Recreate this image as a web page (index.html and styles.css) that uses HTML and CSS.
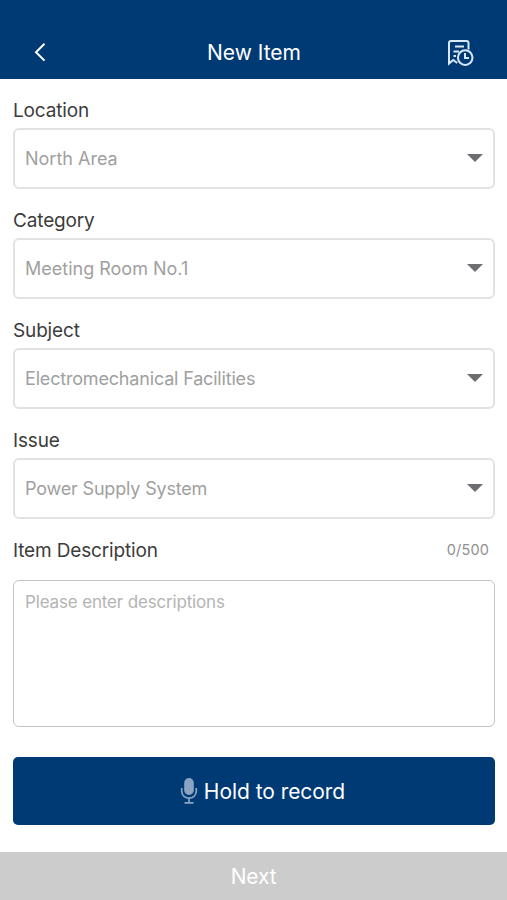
FILE: index.html
```html
<!DOCTYPE html>
<html lang="en">
<head>
<meta charset="utf-8">
<title>New Item</title>
<link rel="stylesheet" href="styles.css">
</head>
<body>
<div class="screen">
  <header class="bar">
    <svg class="back" width="24" height="24" viewBox="0 0 24 24"><path d="M16.500 2.800 L8 11.200 L16.500 19.600"/></svg>
    <h1>New Item</h1>
    <svg class="history" width="28" height="28" viewBox="0 0 28 28"><path d="M10.200 24 L6.200 21 L2 24.500 V4 Q2 2 4 2 H19.500 Q21.500 2 21.500 4 V10.500 M8 7.500 H17 M6.500 12.500 H12 M6.500 17 H9"/><circle cx="18.200" cy="18.600" r="7.300"/><path d="M18 14 V19 H22"/></svg>
  </header>
  <main class="form">
    <div class="field"><label class="label">Location</label><div class="select"><span>North Area</span><i class="caret"></i></div></div>
    <div class="field"><label class="label">Category</label><div class="select"><span>Meeting Room No.1</span><i class="caret"></i></div></div>
    <div class="field"><label class="label">Subject</label><div class="select"><span class="tight">Electromechanical Facilities</span><i class="caret"></i></div></div>
    <div class="field"><label class="label">Issue</label><div class="select"><span class="tight">Power Supply System</span><i class="caret"></i></div></div>
    <div class="desc-head"><label class="label">Item Description</label><span class="count">0/500</span></div>
    <div class="area">Please enter descriptions</div>
    <button class="record"><svg width="18" height="28" viewBox="0 0 18 28"><rect class="mic" x="4.200" y="1" width="9.600" height="17" rx="4.800"/><path d="M1.700 11 V14 C1.700 23.500 16.300 23.500 16.300 14 V11 M9 21 V25.800 M4.500 25.800 H13.500"/></svg><span>Hold to record</span></button>
  </main>
  <footer class="next">Next</footer>
</div>
</body>
</html>
```
FILE: styles.css
```css
* { box-sizing: border-box; }
body { margin: 0; font-family: Inter, "Liberation Sans", sans-serif; background: #fff; }
.screen { height: 900px; display: flex; flex-direction: column; }
.bar { height: 79px; flex: none; background: #003a75; color: #fff; padding: 26px 32px 0 28px; display: grid; grid-template-columns: 28px 1fr 28px; align-items: center; }
.bar h1 { margin: 0 0 0 5px; font-size: 21px; font-weight: 400; text-align: center; }
.bar svg { fill: none; stroke: #fff; stroke-width: 2; }
.bar .history { stroke: #d9e9fa; stroke-width: 2; }
.form { flex: 1; padding: 17px 12px 0 13px; }
.field { height: 110px; }
.label { display: block; height: 32px; line-height: 30px; font-size: 19px; letter-spacing: -0.150px; color: #3c3c3c; }
.select { height: 61px; border: 2px solid #e2e2e2; border-radius: 6px; padding: 0 10px; display: flex; justify-content: space-between; align-items: center; font-size: 18px; color: #a0a0a0; }
.tight { letter-spacing: -0.180px; }
.caret { margin-bottom: 2px; border: 8px solid transparent; border-top: 8px solid #6b6d70; border-bottom: 0; }
.desc-head { display: flex; justify-content: space-between; height: 44px; padding-right: 6px; }
.count { font-size: 14.500px; line-height: 28px; color: #909090; letter-spacing: 0.150px; }
.area { height: 147px; border: 1.500px solid #c4c4c4; border-radius: 6px; padding: 10px 11px; font-size: 17px; line-height: 22px; letter-spacing: -0.160px; color: #b4b4b4; }
.record { margin-top: 30px; padding: 0 0 0 17px; width: 100%; height: 68px; border: 0; border-radius: 5px; background: #003a75; color: #fff; font: 21px Inter, sans-serif; display: flex; align-items: center; justify-content: center; gap: 6px; letter-spacing: -0.050px; }
.record svg { fill: none; stroke: #8ba4c2; stroke-width: 1.700; }
.record .mic { fill: #8ba4c2; stroke: none; }
.next { height: 48px; background: #ccc; color: #fff; font-size: 21px; letter-spacing: -0.150px; display: flex; align-items: center; justify-content: center; }
```
